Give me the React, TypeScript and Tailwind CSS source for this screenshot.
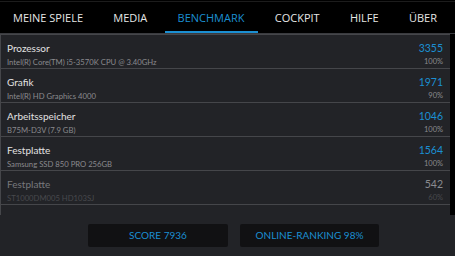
import React from "react";

const tabs = ["MEINE SPIELE", "MEDIA", "BENCHMARK", "COCKPIT", "HILFE", "ÜBER"];

const rows = [
  { title: "Prozessor", sub: "Intel(R) Core(TM) i5-3570K CPU @ 3.40GHz", score: "3355", pct: "100%", dim: false },
  { title: "Grafik", sub: "Intel(R) HD Graphics 4000", score: "1971", pct: "90%", dim: false },
  { title: "Arbeitsspeicher", sub: "B75M-D3V (7.9 GB)", score: "1046", pct: "100%", dim: false },
  { title: "Festplatte", sub: "Samsung SSD 850 PRO 256GB", score: "1564", pct: "100%", dim: false },
  { title: "Festplatte", sub: "ST1000DM005 HD103SJ", score: "542", pct: "60%", dim: true },
];

export default function App() {
  return (
    <div
      className="w-[455px] h-[256px] bg-[#222327] flex flex-col overflow-hidden"
      style={{ fontFamily: 'Lato, "Open Sans", sans-serif' }}
    >
      <div className="h-[34px] bg-black flex flex-col">
        <div className="h-[1px] mt-[1px] bg-[#1c1c1c]" />
        <div className="flex-1 flex justify-between pr-[5px]" style={{ fontFamily: '"Open Sans", sans-serif' }}>
          {tabs.map((t) => {
            const active = t === "BENCHMARK";
            return (
              <div
                key={t}
                className={`px-[13px] shrink-0 whitespace-nowrap flex items-center pt-[1px] text-[11px] leading-none ${
                  active ? "text-[#1b8fd2] border-b-2 border-[#1b8fd2]" : "text-[#e6e6e6] border-b-2 border-transparent"
                }`}
              >
                {t}
              </div>
            );
          })}
        </div>
        <div className="h-[1px] bg-[#3a3b3f]" />
      </div>
      <div className="flex h-[181px]">
        <div className="flex-1 flex flex-col border-t border-l border-[#45464a]">
          {rows.map((r, i) => (
            <div key={i} className="h-[34px] border-b border-[#45464a] flex justify-between pl-[6px] pr-[7px] pt-[7px]">
              <div className="flex flex-col">
                <span className={`text-[10px] leading-[13px] ${r.dim ? "text-[#77787c]" : "text-[#e2e2e2]"}`}>{r.title}</span>
                <span className={`text-[7.7px] leading-[10px] mt-[2px] ${r.dim ? "text-[#48494d]" : "text-[#8a8a8e]"}`}>{r.sub}</span>
              </div>
              <div className="flex flex-col items-end">
                <span className={`text-[10.5px] leading-[13px] ${r.dim ? "text-[#8a8b8f]" : "text-[#1b8fd2]"}`}>{r.score}</span>
                <span className={`text-[7.5px] leading-[10px] mt-[2px] ${r.dim ? "text-[#48494d]" : "text-[#8a8a8e]"}`}>{r.pct}</span>
              </div>
            </div>
          ))}
        </div>
        <div className="w-[5px] bg-black" />
      </div>
      <div className="flex-1 flex justify-center pl-[12px] gap-[12px] pt-[9px]">
        <div className="w-[140px] h-[23px] bg-[#111113] rounded-[2px] flex items-center justify-center text-[10px] text-[#1b8fd2]">
          SCORE 7936
        </div>
        <div className="w-[139px] h-[23px] bg-[#111113] rounded-[2px] flex items-center justify-center text-[10px] text-[#1b8fd2]">
          ONLINE-RANKING 98%
        </div>
      </div>
    </div>
  );
}
